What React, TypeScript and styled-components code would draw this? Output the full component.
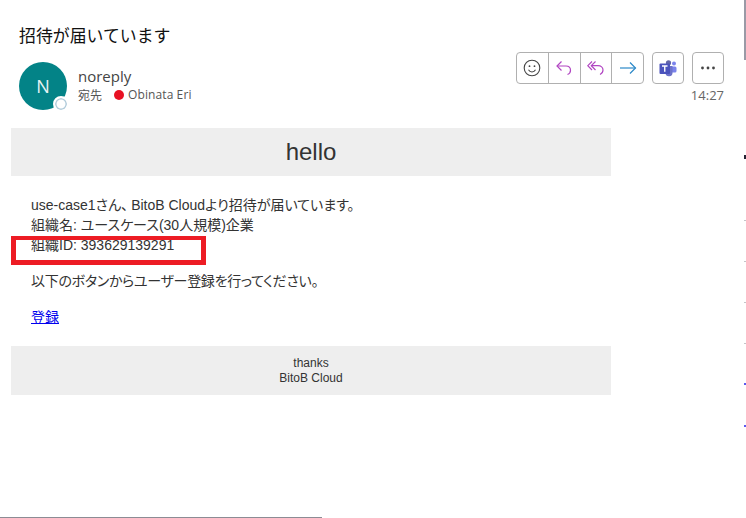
import styled, { createGlobalStyle } from 'styled-components';

const GlobalStyle = createGlobalStyle`
  html, body {
    margin: 0;
    padding: 0;
    background: #fff;
  }
`;

const Page = styled.div`
  position: relative;
  width: 746px;
  height: 518px;
  overflow: hidden;
  background: #fff;
  font-family: "Open Sans", "Noto Sans CJK JP", sans-serif;
`;

const Header = styled.header`
  padding: 24px 22px 0 19px;
`;

const Subject = styled.h1`
  margin: 0;
  font-size: 16.9px;
  line-height: 22px;
  font-weight: 400;
  color: #111;
  font-family: "Noto Sans CJK JP", sans-serif;
`;

const SenderRow = styled.div`
  display: flex;
  justify-content: space-between;
  margin-top: 6px;
  height: 60px;
`;

const Sender = styled.div`
  display: flex;
  gap: 11px;
  padding-top: 10px;
`;

const Avatar = styled.div`
  position: relative;
  width: 48px;
  height: 48px;
  border-radius: 50%;
  background: #038387;
  color: #e8f4f4;
  font-size: 18px;
  display: flex;
  align-items: center;
  justify-content: center;
`;

const Presence = styled.span`
  position: absolute;
  right: -2px;
  bottom: -2px;
  width: 12px;
  height: 12px;
  border-radius: 50%;
  background: #fff;
  border: 2px solid #fff;
  box-shadow: inset 0 0 0 1.5px #b0cbda;
`;

const SenderText = styled.div`
  padding-top: 4px;
`;

const SenderName = styled.div`
  font-size: 15px;
  line-height: 21px;
  color: #444;
`;

const Recipient = styled.div`
  display: flex;
  align-items: center;
  font-size: 12px;
  line-height: 16px;
  color: #555;
`;

const ToLabel = styled.span`
  margin-right: 12px;
  font-family: "Noto Sans CJK JP", sans-serif;
`;

const Dot = styled.span`
  width: 10px;
  height: 10px;
  border-radius: 50%;
  background: #e81123;
  margin-right: 4px;
`;

const RecipientName = styled.span`
  letter-spacing: 0.1px;
`;

const Actions = styled.div`
  display: flex;
  flex-direction: column;
  align-items: flex-end;
`;

const ActionRow = styled.div`
  display: flex;
  gap: 8px;
`;

const ButtonGroup = styled.div<{ $width: number }>`
  display: flex;
  width: ${(p) => p.$width}px;
  height: 32px;
  box-sizing: border-box;
  border: 1px solid #b0b0b0;
  border-radius: 4px;
`;

const GroupButton = styled.div`
  flex: 1;
  display: flex;
  align-items: center;
  justify-content: center;
  box-sizing: border-box;
  & + & {
    border-left: 1px solid #b0b0b0;
  }
`;

const Time = styled.div`
  margin-top: 3px;
  font-size: 13px;
  line-height: 16px;
  color: #666;
`;

const Mail = styled.main`
  width: 600px;
  margin: 16px 0 0 11px;
  font-family: "Liberation Sans", "Noto Sans CJK JP", sans-serif;
  color: #333;
`;

const Hello = styled.div`
  height: 48px;
  line-height: 48px;
  background: #eee;
  text-align: center;
  font-size: 24px;
`;

const MailBody = styled.div`
  padding: 19px 20px;
  font-size: 14px;
  line-height: 20px;
  font-feature-settings: "palt";
`;

const Paragraph = styled.p<{ $tight?: boolean }>`
  margin: 0 0 16px;
  letter-spacing: ${(p) => (p.$tight ? '-0.3px' : 'normal')};
  &:last-child {
    margin-bottom: 0;
  }
`;

const Comma = styled.span`
  letter-spacing: 3px;
`;

const Link = styled.a`
  color: #0000ee;
  text-decoration: underline;
`;

const Footer = styled.div`
  height: 49px;
  box-sizing: border-box;
  padding-top: 10px;
  background: #eee;
  text-align: center;
  font-size: 12px;
  line-height: 15px;
`;

const Highlight = styled.div`
  position: absolute;
  left: 11px;
  top: 236px;
  width: 195px;
  height: 29px;
  box-sizing: border-box;
  border: solid #ed1c24;
  border-width: 4px 5px 5px;
`;

const ScrollThumb = styled.div`
  position: absolute;
  right: 0;
  top: 0;
  width: 2px;
  height: 60px;
  background: #9a9aa6;
`;

const EdgeMark = styled.div<{ $top: number; $color: string; $h: number }>`
  position: absolute;
  right: 0;
  top: ${(p) => p.$top}px;
  width: 2px;
  height: ${(p) => p.$h}px;
  background: ${(p) => p.$color};
`;

const BottomLine = styled.div`
  position: absolute;
  left: 0;
  bottom: 0;
  width: 322px;
  height: 1px;
  background: #8c8c94;
`;

const edgeMarks = [
  { top: 155, color: '#222233', h: 4 },
  { top: 220, color: '#c4c4c8', h: 1 },
  { top: 261, color: '#c4c4c8', h: 1 },
  { top: 302, color: '#c4c4c8', h: 1 },
  { top: 343, color: '#c4c4c8', h: 1 },
  { top: 383, color: '#5a5af0', h: 2 },
  { top: 425, color: '#5a5af0', h: 2 },
];

const App = () => {
  return (
    <Page>
      <GlobalStyle />
      <Header>
        <Subject>招待が届いています</Subject>
        <SenderRow>
          <Sender>
            <Avatar>
              N
              <Presence />
            </Avatar>
            <SenderText>
              <SenderName>noreply</SenderName>
              <Recipient>
                <ToLabel>宛先</ToLabel>
                <Dot />
                <RecipientName>Obinata Eri</RecipientName>
              </Recipient>
            </SenderText>
          </Sender>
          <Actions>
            <ActionRow>
              <ButtonGroup $width={128}>
                <GroupButton>
                  <svg width="18" height="18" viewBox="0 0 18 18" fill="none" stroke="#444" strokeWidth="1.1">
                    <circle cx="9" cy="9" r="7.8" />
                    <circle cx="6.5" cy="7.2" r="0.9" fill="#444" stroke="none" />
                    <circle cx="11.5" cy="7.2" r="0.9" fill="#444" stroke="none" />
                    <path d="M5.5 10.8c.8 1.5 2 2.2 3.5 2.2s2.7-.7 3.5-2.2" />
                  </svg>
                </GroupButton>
                <GroupButton>
                  <svg width="18" height="18" viewBox="0 0 18 18" fill="none" stroke="#b146c2" strokeWidth="1.2">
                    <path d="M6.5 2.5 2 7l4.5 4.5" />
                    <path d="M2 7h9c2.6 0 4.5 1.8 4.5 4.2 0 2-1.2 3.6-3 4.3" />
                  </svg>
                </GroupButton>
                <GroupButton>
                  <svg width="18" height="18" viewBox="0 0 18 18" fill="none" stroke="#b146c2" strokeWidth="1.2">
                    <path d="M5 2.5.8 6.7 5 11" />
                    <path d="M8.5 2.5 4.3 6.7l4.2 4.3" />
                    <path d="M4.3 6.7H11c2.9 0 5 1.9 5 4.4 0 2-1.2 3.6-3 4.4" />
                  </svg>
                </GroupButton>
                <GroupButton>
                  <svg width="18" height="18" viewBox="0 0 18 18" fill="none" stroke="#2b88c8" strokeWidth="1.2">
                    <path d="M1 9h15.5" />
                    <path d="M11 3.5 16.5 9 11 14.5" />
                  </svg>
                </GroupButton>
              </ButtonGroup>
              <ButtonGroup $width={32}>
                <GroupButton>
                  <svg width="18" height="18" viewBox="0 0 18 18">
                    <circle cx="15" cy="4.5" r="2" fill="#7b83eb" />
                    <rect x="11" y="7.5" width="6.5" height="6" rx="1.5" fill="#7b83eb" />
                    <circle cx="9.5" cy="3.8" r="2.6" fill="#6264a7" />
                    <path d="M6 7h7.5v6.5a3.5 3.5 0 0 1-7 .5z" fill="#6d72c9" />
                    <rect x="0.5" y="4.5" width="10.5" height="10.5" rx="1" fill="#4b53bc" />
                    <path d="M3 7h5.5M5.75 7v5.8" stroke="#fff" strokeWidth="1.4" />
                  </svg>
                </GroupButton>
              </ButtonGroup>
              <ButtonGroup $width={32}>
                <GroupButton>
                  <svg width="16" height="4" viewBox="0 0 16 4" fill="#444">
                    <circle cx="2.5" cy="2" r="1.4" />
                    <circle cx="8" cy="2" r="1.4" />
                    <circle cx="13.5" cy="2" r="1.4" />
                  </svg>
                </GroupButton>
              </ButtonGroup>
            </ActionRow>
            <Time>14:27</Time>
          </Actions>
        </SenderRow>
      </Header>
      <Mail>
        <Hello>hello</Hello>
        <MailBody>
          <Paragraph>
            use-case1さん<Comma>、</Comma>BitoB Cloudより招待が届いています。
            <br />
            組織名: ユースケース(30人規模)企業
            <br />
            組織ID: 393629139291
          </Paragraph>
          <Paragraph $tight>以下のボタンからユーザー登録を行ってください。</Paragraph>
          <Paragraph>
            <Link href="#">登録</Link>
          </Paragraph>
        </MailBody>
        <Footer>
          thanks
          <br />
          BitoB Cloud
        </Footer>
      </Mail>
      <Highlight />
      <ScrollThumb />
      {edgeMarks.map((m) => (
        <EdgeMark key={m.top} $top={m.top} $color={m.color} $h={m.h} />
      ))}
      <BottomLine />
    </Page>
  );
};

export default App;
